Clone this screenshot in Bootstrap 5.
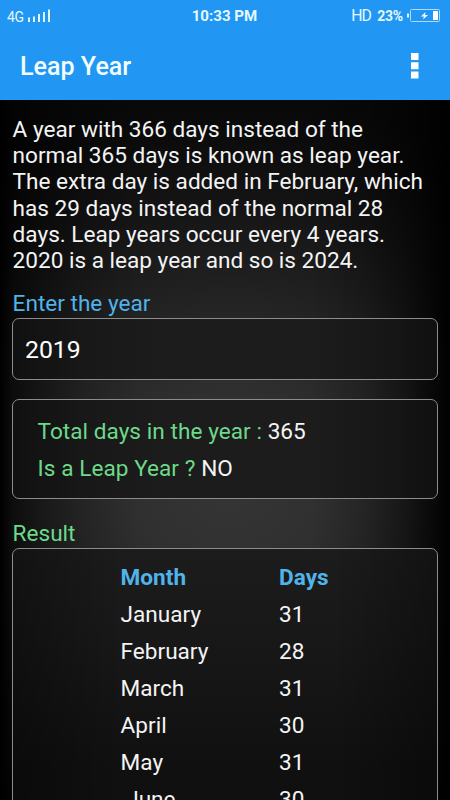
<!DOCTYPE html>
<html lang="en">
<head>
<meta charset="utf-8">
<meta name="viewport" content="width=device-width, initial-scale=1">
<title>Leap Year</title>
<link href="https://cdn.jsdelivr.net/npm/bootstrap@5.3.0/dist/css/bootstrap.min.css" rel="stylesheet">
<style>
  body { font-family: Roboto, "Noto Sans", sans-serif; font-size: 22.58px; line-height: 26.3px; background: #000; color: #f4f4f4; }
  .screen { height: 800px; }
  .app-head { height: 100px; background: #2196f3; color: #f2fdff; }
  .status { height: 32px; padding: 0 10px 0 7px; line-height: 16px; color: #e4f8ff; }
  .side { flex: 1 1 0; }
  .net { font-size: 14px; letter-spacing: -.4px; padding-top: 2px; }
  .clock { font-size: 15.1px; font-weight: 700; padding-left: 2px; }
  .hd { font-size: 15.8px; letter-spacing: -1.1px; }
  .pct { font-size: 14px; letter-spacing: -.2px; font-weight: 700; margin-left: 6.5px; }
  .title-bar { height: 68px; padding: 1px 31px 0 20px; }
  .app-title { font-size: 25.1px; line-height: 30px; font-weight: 500; padding-top: 1px; }
  .page-body {
    padding: 16.8px 12px 0 12px;
    background:
      linear-gradient(90deg, #000 0, rgba(0,0,0,.6) 12px, rgba(0,0,0,.35) 40px, rgba(0,0,0,.12) 85px, rgba(0,0,0,0) 140px, rgba(0,0,0,0) 310px, rgba(0,0,0,.15) 365px, rgba(0,0,0,.42) 405px, rgba(0,0,0,.78) 436px, #000 450px),
      radial-gradient(ellipse 430px 395px at 230px 385px, #353535 0, #303030 22%, #242424 45%, #151515 70%, #0b0b0b 90%, #080808 100%);
  }
  .copy { padding-left: .6px; }
  .panel { border: 1.5px solid #8c8c8c; border-radius: 7px; background: linear-gradient(90deg, #101010 0, #181818 70px, #1c1c1c 150px, #1c1c1c 300px, #161616 380px, #101010 100%); }
  .sky { color: #50b3e9; }
  .mint { color: #6dd98b; }
  .year-label { margin-top: 16.6px; padding-left: .6px; }
  .year-box { height: 62px; margin-top: .6px; padding: 3px 0 0 12px; font-size: 24.8px; color: #fff; }
  .facts { height: 100px; margin-top: 18.7px; padding: 19px 24px 0 24.6px; }
  .fact-row { height: 37px; word-spacing: .2px; }
  .result-label { margin-top: 22.7px; padding-left: .6px; }
  .result-box { height: 500px; margin-top: .6px; padding: 15.9px 0 0 107.6px; background: linear-gradient(90deg, rgba(0,0,0,.35) 0, rgba(0,0,0,0) 110px, rgba(0,0,0,0) 320px, rgba(0,0,0,.35) 100%), linear-gradient(#1c1c1c 0, #181818 90px, #101010 220px, #0d0d0d 100%); }
  .month-row { height: 36.9px; }
  .month-name { width: 158.5px; white-space: pre; }
</style>
</head>
<body>
<div class="screen d-flex flex-column overflow-hidden">
  <header class="app-head flex-shrink-0">
    <div class="status d-flex align-items-center">
      <div class="side d-flex align-items-center">
        <span class="net">4G</span>
        <svg width="28" height="16" viewBox="0 0 28 16" fill="#dff7ff" aria-hidden="true"><path d="M4 9.500h2V14H4zM9 8.500h2V14H9zM14 6h2v8h-2zM19 4h2v10h-2zM24 1.500h2V14h-2z"/></svg>
      </div>
      <span class="clock">10:33 PM</span>
      <div class="side d-flex align-items-center justify-content-end">
        <span class="hd">HD</span>
        <span class="pct">23%</span>
        <svg class="ms-1" width="33" height="14" viewBox="0 0 33 14" aria-hidden="true"><path d="M0 4.500h2v4H0z" fill="#dff7ff"/><rect x="3.500" y=".5" width="29" height="12" rx="1" fill="none" stroke="#a9dcff"/><path d="M26 2h5v9h-5z" fill="#fff"/><path d="M18.500 3 14 7.500h3l-1 3 5-4.500h-3z" fill="#fff"/></svg>
      </div>
    </div>
    <div class="title-bar d-flex align-items-center justify-content-between">
      <h1 class="app-title mb-0">Leap Year</h1>
      <svg width="12" height="28" viewBox="0 0 12 28" fill="#fff" role="img" aria-label="More options"><path d="M4 0h7.500v7H4zM4 9.200h7.500v7H4zM4 18.500h7.500v7H4z"/></svg>
    </div>
  </header>
  <main class="page-body flex-grow-1 overflow-hidden">
    <p class="copy mb-0">A year with 366 days instead of the<br>normal 365 days is known as leap year.<br>The extra day is added in February, which<br>has 29 days instead of the normal 28<br>days. Leap years occur every 4 years.<br>2020 is a leap year and so is 2024.</p>
    <div class="year-label sky">Enter the year</div>
    <div class="year-box panel d-flex align-items-center">2019</div>
    <div class="facts panel">
      <div class="fact-row"><span class="mint">Total days in the year :</span> 365</div>
      <div class="fact-row"><span class="mint">Is a Leap Year ?</span> NO</div>
    </div>
    <div class="result-label mint">Result</div>
    <div class="result-box panel">
      <div class="month-row d-flex fw-bold sky"><span class="month-name">Month</span><span>Days</span></div>
      <div class="month-row d-flex"><span class="month-name">January</span><span>31</span></div>
      <div class="month-row d-flex"><span class="month-name">February</span><span>28</span></div>
      <div class="month-row d-flex"><span class="month-name">March</span><span>31</span></div>
      <div class="month-row d-flex"><span class="month-name">April</span><span>30</span></div>
      <div class="month-row d-flex"><span class="month-name">May</span><span>31</span></div>
      <div class="month-row d-flex"><span class="month-name"> June</span><span>30</span></div>
    </div>
  </main>
</div>
<script src="https://cdn.jsdelivr.net/npm/bootstrap@5.3.0/dist/js/bootstrap.bundle.min.js"></script>
</body>
</html>
